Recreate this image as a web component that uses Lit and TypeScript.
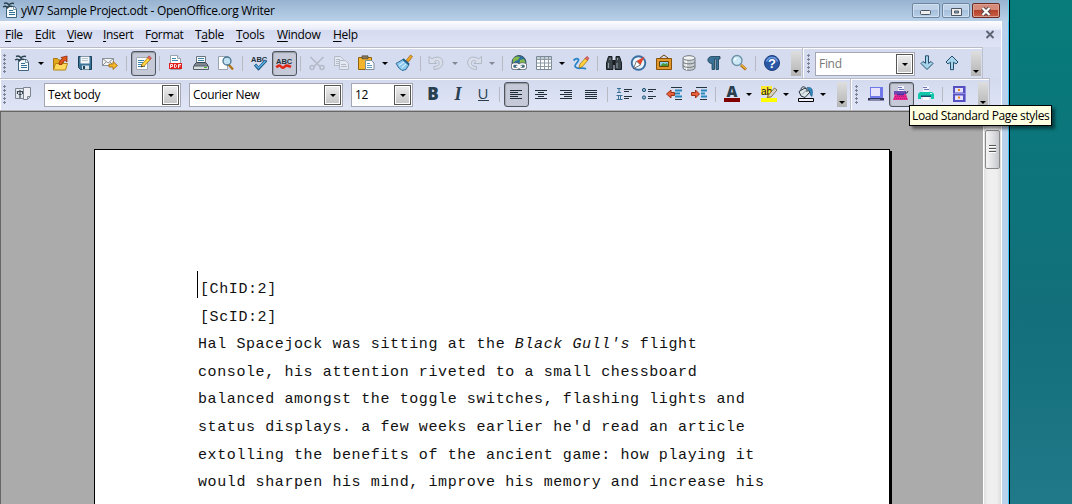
import { LitElement, html, css, svg } from "lit";
import { customElement } from "lit/decorators.js";
import { classMap } from "lit/directives/class-map.js";

const sheet = svg`<path d="M3.500 4.500h8l2 2.500v8.500h-10z" fill="#f6fafc" stroke="#3f667f"/><path d="M10.500 5v2.500h3" fill="none" stroke="#7696aa"/><path d="M6 8.500h4M6 10.500h6M6 12.500h6" stroke="#2f7195"/><path d="M1 1.500c2-1 4 0 5 1.500c1-1.500 3-2 5-1.500M0 5c2-1.200 3.500-.8 4.500.8C5.500 4.500 7 4 9 4.500" fill="none" stroke="#2b424f" stroke-width="1.400"/>`;
const sheetLines = svg`<path d="M1.500 2.500h11v12h-11z" fill="#fdfeff" stroke="#a0adb8"/><path d="M3 5.500h6M3 7.500h5M3 9.500h4M3 11.500h7" stroke="#3a86ae"/>`;

const icons: Record<string, unknown> = {
  doc: sheet,
  open: svg`<path d="M1.500 3.500h4l1 1.500h5v9h-10z" fill="#e6a81c" stroke="#a87810"/><path d="M3.500 8.500h12l-2 6.500H1.500z" fill="#ffd95c" stroke="#b58412"/><path d="M7 9.500c0-3 1.500-4.500 3.500-5.500L9 2.500l6-1.500v6l-1.800-1.500C11 6.500 10 7.500 10 9.500z" fill="#e2551d" stroke="#8f2c08" stroke-width=".8"/>`,
  save: svg`<path d="M1.500 1.500h13v13h-11l-2-2z" fill="#3a7396" stroke="#1c3f58"/><path d="M3.500 1.500h9v7h-9z" fill="#f2f6f8"/><path d="M5 3.500h6M5 5.500h6" stroke="#b8c6d0"/><path d="M5 10.500h7v4H5z" fill="#d8e4ec"/><path d="M6 11h2v3H6z" fill="#1c3f58"/>`,
  mail: svg`<path d="M.5 3.500h11v7H.5z" fill="#f5f5f5" stroke="#8b929a"/><path d="M.5 3.500L6 8l5.500-4.500M.5 10.500L4 7M11.500 10.500L8 7" fill="none" stroke="#8b929a"/><path d="M7 9h4V6.500l4.500 4L11 14.500V12H7z" fill="#f3b62c" stroke="#a06a08" stroke-width=".8"/>`,
  edit: svg`${sheetLines}<path d="M7 9l6.500-7 2.300 2-6.500 7L6 12z" fill="#ffd23e" stroke="#9a6b10" stroke-width=".7"/><path d="M12.500 2.500L14 .8l2.500 2.200-1.500 1.600z" fill="#e86a6a" stroke="#9c2c2c" stroke-width=".5"/><path d="M5.800 12.200l.8-2 1.500 1.300z" fill="#333"/>`,
  pdf: svg`<path d="M2.500.5h7l3 3v11h-10z" fill="#fff" stroke="#98a4ae"/><path d="M9.500.5v3h3" fill="#dfe6ea" stroke="#98a4ae"/><path d="M4 3.500h4M4 5.500h6" stroke="#3a86ae"/><path d="M1 8h13v6H1z" fill="#e01f1f"/><path d="M2.500 13V9.500h2v2H3M6.500 9.500v3h1l1-1v-1l-1-1zM10.500 13V9.500H13M10.500 11h2" fill="none" stroke="#fff" stroke-width=".9"/>`,
  print: svg`<path d="M3.500 1.500h9v6h-9z" fill="#f7f9fa" stroke="#68747e"/><path d="M5 3.500h6M5 5.500h6" stroke="#3a86ae"/><path d="M1.500 9.500l2-2h9l2 2v2h-13z" fill="#7c878f" stroke="#3b464e"/><path d="M.5 11h15v3.500H.5z" fill="#d8dddf" stroke="#525d65"/><path d="M11 12.500h3" stroke="#49b02c"/>`,
  preview: svg`<path d="M.5 1.500h9v13h-9z" fill="#fff" stroke="#98a4ae"/><path d="M10.500 9.500l4.500 5" stroke="#b0751a" stroke-width="2.400"/><circle cx="9" cy="6" r="4" fill="#c2e1f2" stroke="#4a7690" stroke-width="1.300"/>`,
  spell: svg`<text x="0" y="6.500" class="abc">ABC</text><path d="M4 9.500l3.500 4L15 5.500" fill="none" stroke="#1d567f" stroke-width="3"/><path d="M4.500 10l3 3L14.500 6" fill="none" stroke="#57b0e4" stroke-width="1.500"/>`,
  auto: svg`<text x="0" y="8.500" class="abc">ABC</text><path d="M.5 12.500c1-1.500 3-3 4.500-1s2.500 1.500 4-.2 3.500-.5 6 .7" fill="none" stroke="#e12718" stroke-width="2.600"/>`,
  cut: svg`<path d="M1.500 2l10 10M14.500 2l-10 10" stroke="#b4bac6" stroke-width="1.600"/><circle cx="3" cy="12.500" r="2" fill="none" stroke="#b4bac6" stroke-width="1.500"/><circle cx="13" cy="12.500" r="2" fill="none" stroke="#b4bac6" stroke-width="1.500"/>`,
  copy: svg`<path d="M.5 1.500h6l3 3v6h-9z" fill="#e3e7f2" stroke="#b4bac6"/><path d="M2 4.500h4M2 6.500h3M2 8.500h3" stroke="#b4bac6"/><path d="M5.500 5.500h6l3 3v6h-9z" fill="#e3e7f2" stroke="#b4bac6"/><path d="M7 9.500h5M7 11.500h6" stroke="#b4bac6"/>`,
  paste: svg`<path d="M-.5 2.500h13v12h-13z" fill="#f2b42a" stroke="#8f6410"/><path d="M3 .8h6v3H3z" fill="#8a7a5c" stroke="#40382a" stroke-width=".6"/><path d="M6.500 5.500h6l2.500 2.500v6.500H6.500z" fill="#fff" stroke="#7d8d9a"/><path d="M8 8.500h3M8 10.500h5M8 12.500h5" stroke="#3a86ae" stroke-width=".8"/>`,
  brush: svg`<path d="M10 5.500l4.500-5.500 2 1.500-4 5.500z" fill="#f2a72a" stroke="#8f5e10" stroke-width=".7"/><path d="M0 8.500l7-4 6 5-3 5-4 1c-1-2-3-1-3-3-1.500 0-1-2-3-4z" fill="#8ecbf0" stroke="#2a6a96"/><path d="M7 4l6 5.500" stroke="#1f5f8a" stroke-width="1.800"/><path d="M3 10.500l5-3.500M5.500 13l4.500-4" stroke="#e5f5fd"/>`,
  undo: svg`<path d="M0 1.500l2 1.500 1 1C6 1.500 12 1 13.500 5.500S11 14.500 5 14.500v-3c4 0 5.500-1.500 5-4S7 5 5.500 6.500L7.500 8.500H0z" fill="#d9deea" stroke="#b0b7c5"/>`,
  redo: svg`<path d="M15.500 1.500l-2 1.500-1 1C9.500 1.500 3.500 1 2 5.500S4.500 14.500 10.500 14.500v-3c-4 0-5.500-1.500-5-4S8.500 5 10 6.500L8 8.500h7.500z" fill="#d9deea" stroke="#b0b7c5"/>`,
  globe: svg`<circle cx="8" cy="7.500" r="7" fill="#2d6f9c" stroke="#3c5561"/><path d="M2 4c2-3 5-3 7-2l-2 3-3 1-2 3zM9 5l4-1 1.500 4-3 3-3-2z" fill="#86b94a"/><rect x="1.500" y="9" width="6" height="4.500" rx="2" fill="none" stroke="#55626a" stroke-width="3"/><rect x="8.500" y="9" width="6" height="4.500" rx="2" fill="none" stroke="#55626a" stroke-width="3"/><rect x="1.500" y="9" width="6" height="4.500" rx="2" fill="none" stroke="#fff" stroke-width="1.500"/><rect x="8.500" y="9" width="6" height="4.500" rx="2" fill="none" stroke="#fff" stroke-width="1.500"/><path d="M5 11.300h6" stroke="#fff" stroke-width="1.300"/>`,
  table: svg`<path d="M.5 1.500h15v13H.5z" fill="#fff" stroke="#7b8a96"/><path d="M1 2h14v2H1z" fill="#c3ced6"/><path d="M1 4.500h15M1 8h15M1 11.500h15M4.500 2v12M8.500 2v12M12.500 2v12" stroke="#8b9aa5"/>`,
  draw: svg`<path d="M.5 5.500c3-3 7-2 4 1.500S1 12 4 13s6-1 9 1" fill="none" stroke="#2784c6" stroke-width="1.800"/><path d="M7 9l5.500-6L15 5l-5.500 6.500L6 13z" fill="#ffd23e" stroke="#9a6b10" stroke-width=".7"/><path d="M12 3.500L14 1.300 16 3.200l-1.500 2z" fill="#e86a6a" stroke="#9c2c2c" stroke-width=".5"/>`,
  find: svg`<path d="M2.500 1.500h3.500v3L7 6v8.500H.5V8zM13.500 1.500H10v3L9 6v8.500h6.500V8z" fill="#3c464c" stroke="#171d21"/><path d="M7 5h2v5H7z" fill="#171d21"/><path d="M2.500 8v5M11 8v5M4 3v2M11.500 3v2" stroke="#93a2ab"/>`,
  nav: svg`<circle cx="7.500" cy="8" r="6.800" fill="#e9f4fb" stroke="#3b6fa3" stroke-width="1.900"/><path d="M13.500 1.500L9.500 10 5.500 6z" fill="#e4452a"/><path d="M2.500 13.500L5.500 6l4 4z" fill="#fff" stroke="#444" stroke-width=".7"/>`,
  gallery: svg`<path d="M8 0L4 3M8 0l4 3" stroke="#6b4208"/><path d="M.5 3.500h15v11H.5z" fill="#e09a2c" stroke="#8a530b"/><path d="M3.500 6.500h9v5h-9z" fill="#8cd0f0" stroke="#6b4208"/><path d="M4 11l3-3 2 1 2-1 1.500 3z" fill="#4d9a35"/>`,
  db: svg`<path d="M2 3.500v9.500c0 3 12 3 12 0V3.500z" fill="#c8cdd0" stroke="#71797e"/><path d="M4 5v9M5.500 5v10" stroke="#fff"/><ellipse cx="8" cy="3" rx="6" ry="2.300" fill="#f3f5f5" stroke="#71797e"/><path d="M2 7c1 2.500 11 2.500 12 0M2 10.500c1 2.500 11 2.500 12 0" fill="none" stroke="#71797e"/>`,
  pilcrow: svg`<path d="M14 1.500H6C.5 1.500.5 8.500 6 8.500V14.500h2.500V4H10v10.500h2.500V4H14z" fill="#3b7396" stroke="#183c54" stroke-width=".8"/>`,
  zoom: svg`<path d="M10 10l5 4.500" stroke="#a86b12" stroke-width="3"/><path d="M10.500 10l4.500 4" stroke="#f0b53a" stroke-width="1.300"/><circle cx="6" cy="5.500" r="5" fill="#cde8f6" stroke="#6d92a8" stroke-width="1.400"/><path d="M3.500 5.500c0-1.500 1-2 2-2.300" fill="none" stroke="#fff" stroke-width="1.300"/>`,
  help: svg`<circle cx="8" cy="8" r="7.500" fill="#2a57a5" stroke="#1d3f7e"/><path d="M2.500 6.500C4 1 12 1 13.500 6.500" fill="none" stroke="#6e9be0" stroke-width="1.500"/><text x="8" y="12.800" class="q">?</text>`,
  styles: svg`<path d="M.5 2.500h9v10h-9z" fill="#e4e7ee" stroke="#7b8691"/><path d="M8.500 1.500h7v9l-3 3H8.500z" fill="#eef0f5" stroke="#7b8691"/><path d="M15 10.500h-2.500V13" fill="none" stroke="#7b8691"/><path d="M2.500 8V5.500h5V8M5 4v8M3.500 8.500h3" stroke="#3c4752" stroke-width="1.200" fill="none"/>`,
  bold: svg`<text x="8" y="14" class="fmt b">B</text>`,
  italic: svg`<text x="8" y="14" class="fmt i">I</text>`,
  under: svg`<text x="8" y="12.500" class="fmt u">U</text><path d="M3 14.500h11" stroke="#28404f"/>`,
  left: svg`<path d="M2 4.500h12M2 6.500h8M2 8.500h12M2 10.500h8M2 12.500h12" stroke="#1f2d36"/>`,
  center: svg`<path d="M2 4.500h12M5 6.500h6M2 8.500h12M5 10.500h6M2 12.500h12" stroke="#1f2d36"/>`,
  right: svg`<path d="M2 4.500h12M6 6.500h8M2 8.500h12M6 10.500h8M2 12.500h12" stroke="#1f2d36"/>`,
  justify: svg`<path d="M2 4.500h12M2 6.500h12M2 8.500h12M2 10.500h12M2 12.500h12" stroke="#1f2d36"/>`,
  numbers: svg`<path d="M1 2.500h4M3 2v4M1 6.500h4M.5 9.500h6M2.500 9v4M4.500 9v4M.5 13.500h6" stroke="#3a7196"/><path d="M8 3.500h8M8 5.500h5M8 10.500h8M8 12.500h5" stroke="#26343d"/>`,
  bullets: svg`<circle cx="3" cy="4" r="1.600" fill="#8fc0de" stroke="#1f4d6b"/><circle cx="3" cy="11.500" r="1.600" fill="#8fc0de" stroke="#1f4d6b"/><path d="M7 3.500h8M7 5.500h5M7 10.500h8M7 12.500h5" stroke="#26343d"/>`,
  outdent: svg`<path d="M5 1.500h11M9 13.500h7" stroke="#26343d"/><path d="M9 4.500h7M9 7.500h5M9 10.500h7" stroke="#2b86bd" stroke-width="1.800"/><path d="M.5 8L5 4v2.500h3.500v3H5V12z" fill="#e8603a" stroke="#94250c" stroke-width=".9"/>`,
  indent: svg`<path d="M5 1.500h11M9 13.500h7" stroke="#26343d"/><path d="M10 4.500h6M10 7.500h4M10 10.500h6" stroke="#2b86bd" stroke-width="1.800"/><path d="M8.500 8L4.500 4v2.500H.5v3h4V12z" fill="#e8603a" stroke="#94250c" stroke-width=".9"/>`,
  color: svg`<text x="8" y="10.500" class="fmt a">A</text><path d="M0 12h16v4H0z" fill="#800000"/>`,
  mark: svg`<path d="M0 0h11v9H0z" fill="#ffe92e"/><text x="0" y="8.500" class="ab">ab</text><path d="M7 9.500L13.500 2l2.500 2-6 7-4 .5z" fill="#d9d4c5" stroke="#6e5b29" stroke-width=".8"/><path d="M6 11l1-2 2 1.500z" fill="#c98c1a"/><path d="M0 12h16v4H0z" fill="#ff0"/>`,
  bucket: svg`<path d="M9 1.500c7-1 5.500 5 5 9-2.500-1-1.500-4-3-5.500z" fill="#2e86bd" stroke="#1d567f" stroke-width=".6"/><path d="M1 5.500l6-3.500 5 4-5 5.500-4-1.500z" fill="#dfe6ea" stroke="#27343d"/><path d="M3 4c0-5 6-4 6 2" fill="none" stroke="#27343d"/><path d="M4 8.500l5-5" stroke="#8a979f"/><path d="M.5 12.500h15v3H.5z" fill="#eef1fb" stroke="#000"/>`,
  monitor: svg`<path d="M2 1h13v11H2z" fill="#6f78ea"/><path d="M3 2h9v8H3z" fill="#e6e3fb"/><path d="M0 12h16v2.500H0z" fill="#34365e"/><path d="M2 13.500h10" stroke="#8188b0"/>`,
  printPink: svg`<path d="M5 0h6v5H5z" fill="#f4f4ff"/><path d="M5 1.500h4M6 3.500h5" stroke="#7076b5"/><path d="M1 5h12v4H1z" fill="#6a4bb4"/><path d="M12 7h2l1-2" fill="none" stroke="#2d2a58"/><path d="M2 8h11l2 6H0z" fill="#e82a90"/><path d="M4 8.500h7" stroke="#4b2f9e" stroke-width="1.500"/><path d="M2 10.500h12M1 12.500h13" stroke="#b3187a" stroke-dasharray="1 1"/>`,
  printGreen: svg`<path d="M5 0h6v6H5z" fill="#f4f4ff"/><path d="M5 1.500h4M6 3.500h5" stroke="#7076b5"/><path d="M2 6h12l2 2v5h-3v-2H3v2H0V8z" fill="#13c7ab"/><path d="M3 9.500h10v1.500H3z" fill="#1d4f75"/><path d="M5 11h6v3H5z" fill="#fff"/><path d="M12 7.500h2" stroke="#d7fff6"/>`,
  cabinet: svg`<path d="M2 0h13v16H2z" fill="#5450c0"/><path d="M4 2h8v4.500H4zM4 9.500h8v4.500H4z" fill="#e5e0fb"/><path d="M7 4h2M7 11.500h2" stroke="#f08a1a" stroke-width="1.800"/><path d="M14.500 0v16M2 7.500h13" stroke="#8f8ce6"/>`,
  down: svg`<path d="M6.500.8h3v7.500l2.500-1.800 2 2L8 14.500 2 8.500l2-2 2.500 1.800z" fill="#a5d3ea" stroke="#244e6c"/>`,
  up: svg`<path d="M6.500 14.700h3V7.200L12 9l2-2-6-6-6 6 2 2 2.500-1.800z" fill="#a5d3ea" stroke="#244e6c"/>`,
};

type Item = string;

// "|" separator, "v" drop-down arrow, "x" disabled arrow, "*name" pressed button
const standard: Item[] = [
  "doc", "v", "open", "save", "mail", "|", "*edit", "|", "pdf", "print", "preview", "|",
  "spell", "*auto", "|", "cut", "copy", "paste", "v", "brush", "|", "undo", "x", "redo", "x", "|",
  "globe", "table", "v", "draw", "|", "find", "nav", "gallery", "db", "pilcrow", "zoom", "|", "help",
];
const formatting: Item[] = [
  "bold", "italic", "under", "|", "*left", "center", "right", "justify", "|",
  "numbers", "bullets", "outdent", "indent", "|", "color", "v", "mark", "v", "bucket", "v",
];
const pageTools: Item[] = ["monitor", "*printPink", "printGreen", "|", "cabinet"];

const menus: [string, string, string, number][] = [
  ["", "F", "ile", 30], ["", "E", "dit", 32], ["", "V", "iew", 36], ["", "I", "nsert", 42],
  ["F", "o", "rmat", 50], ["T", "a", "ble", 41], ["", "T", "ools", 41], ["", "W", "indow", 56], ["", "H", "elp", 40],
];

@customElement("app-root")
export class AppRoot extends LitElement {
  static styles = css`
    :host { display: block; width: 1072px; height: 504px; overflow: hidden; position: relative;
      font: 12px "Open Sans", "Noto Sans", sans-serif; color: #000; }
    * { box-sizing: border-box; }
    .desktop { display: flex; height: 504px;
      background: linear-gradient(to bottom, #077c7a 0, #0a777b 110px, #136f7b 320px, #207988 504px); }
    .window { width: 1010px; height: 504px; display: flex; flex-direction: column; border-right: 1px solid #000;
      background: #b9d1ea; }
    .title { height: 21px; flex: none; display: flex; align-items: center; padding: 0 8px 0 3px;
      background: linear-gradient(#98b3d0, #b9d0e9); border-right: 1px solid #5bd8f5; }
    .title svg { margin-top: -1px; }
    .caption { margin-left: 2px; flex: 1; line-height: 20px; letter-spacing: -0.28px; white-space: nowrap; }
    .wbtn { width: 28px; height: 15px; margin-left: 2px; border: 1px solid #6d87a3; border-radius: 2px;
      background: linear-gradient(#bfd2e7 45%, #a6c0dc 50%, #b8cfe6); box-shadow: inset 0 0 0 1px #d0e0f0; display: flex; }
    .wbtn svg { margin: auto; }
    .wbtn.close { background: linear-gradient(#d58a7a 45%, #b4432c 50%, #c95f47); border-color: #6d2a20; box-shadow: inset 0 0 0 1px #dba294; }
    .body { flex: 1; min-height: 0; display: flex; border-right: 1px solid #3cc8f4; }
    .client { width: 1002px; display: flex; flex-direction: column; background: #dfe4f5; border-right: 1px solid #fff; }
    .menubar { height: 26px; flex: none; display: flex; align-items: center; padding: 1px 5px 0;
      background: linear-gradient(#fdfdff 0, #e7eaf8 9px, #d4daef 9px, #e0e4f6 26px); }
    .menu { line-height: 24px; letter-spacing: -0.3px; white-space: nowrap; flex: none; }
    .menu u { text-underline-offset: 2px; }
    .menubar .x { margin-left: auto; margin-right: 1px; }
    .bars { display: flex; flex: none; }
    .bars.one { height: 31px; background: #d6dcf0; }
    .bars.two { height: 33px; background: linear-gradient(#d3daee, #e0e5f6); border-bottom: 1px solid #b4b4b8; }
    .bar { display: flex; border-top: 1px solid #b9bbc6; box-shadow: inset 1px 1px #fff; border-right: 1px solid #bfc1ca;
      align-items: flex-start; padding-top: 3px; }
    .bar.std { width: 803px; } .bar.search { width: 180px; } .bar.fmtbar { width: 851px; } .bar.page { width: 139px; }
    .grip { width: 4px; height: 20px; margin: 3px 4px 0 3px; flex: none;
      background: radial-gradient(circle at 1.500px 1.500px, #7c8296 0 1px, transparent 1.200px) 0 0 / 4px 4px; }
    .search .grip { margin-left: 4px; }
    .page .grip { margin-left: 4px; margin-right: 5px; }
    .cell { width: 25px; height: 25px; padding: 4px 0 0 4px; flex: none; }
    .cell.on { border: 1px solid #51555f; border-radius: 3px; padding: 3px 0 0 3px; background: #c6cad8;
      box-shadow: inset 0 1px 1px #92969f, inset 1px 0 1px #a6aab5; }
    .arrow { width: 12px; height: 25px; padding: 11px 0 0 2px; flex: none; }
    .off { opacity: .38; }
    .sep { width: 8px; height: 25px; flex: none; padding: 5px 0 0 3px; }
    .sep::before { content: ""; display: block; width: 1px; height: 15px; background: #b8bac2; }
    .fmtbar .arrow { padding-left: 1px; }
    svg { display: block; overflow: visible; }
    .more { width: 10px; height: 25px; flex: none; margin-left: auto; padding: 19px 0 0 2px;
      background: linear-gradient(#dedede, #b4b4b4); }
    .std .more, .search .more { margin-right: 1px; }
    .fmtbar .more { margin-right: 3px; } .page .more { margin-right: 1px; }
    .combo { height: 24px; margin-top: 1px; border: 1px solid #a4a7b2; background: #fff; flex: none; display: flex; padding: 1px 1px 1px 3px; }
    .combo span { flex: 1; line-height: 20px; letter-spacing: -0.3px; white-space: nowrap; }
    .combo .drop { width: 17px; height: 20px; border: 1px solid #555; box-shadow: inset 0 0 0 1px #fff;
      background: linear-gradient(#eee, #c4c4c4); padding: 8px 0 0 5px; }
    .styles { width: 33px; display: flex; flex: none; }
    .search .combo { color: #777; }
    .main { flex: 1; min-height: 0; display: flex; border-top: 1px solid #666; }
    .canvas { width: 983px; background: #ababab; border-left: 1px solid #666; padding: 37px 0 0 93px; }
    .paper { width: 796px; height: 500px; background: #fff; border: 1px solid #000; box-shadow: 2px 2px #000;
      padding: 121px 0 0 103px; font: 15px/37px "Liberation Mono", monospace; letter-spacing: .6px; white-space: pre; color: #111; }
    .line { height: 27.600px; }
    .line.caret { box-shadow: -1px 0 #000; height: 27px; margin-bottom: .6px; }
    .tag { padding-left: 2px; }
    .scroll { width: 18px; border-left: 1px solid #fff; padding: 18px 1px 0; background: linear-gradient(90deg, #e0e0e0, #f0f0f0 4px, #eee 13px, #dcdcdc); }
    .thumb { height: 39px; width: 15px; border: 1px solid #888; border-radius: 2px; background: linear-gradient(90deg, #f5f5f5, #e0e0e4 50%, #c5c6cc);
      padding: 14px 0 0 3px; }
    .tip { position: absolute; left: 909px; top: 105px; width: 143px; height: 21px; border: 1px solid #000; background: #ffffe1;
      line-height: 20px; padding-left: 2px; letter-spacing: -0.37px; white-space: nowrap; box-shadow: 3px 3px 3px #0007; }
    .abc { font: bold 7.500px "Liberation Sans"; fill: #22303a; }
    .q { font: bold 13px "Liberation Sans"; fill: #fff; text-anchor: middle; }
    .fmt { fill: #28404f; text-anchor: middle; }
    .b { font: 800 17px "Open Sans"; } .i { font: italic bold 18px "Liberation Serif"; }
    .u { font: 15px "Open Sans"; } .a { font: 800 15px "Open Sans"; }
    .ab { font: 10px "Liberation Sans"; fill: #111; }
  `;

  private icon(name: string) {
    return html`<svg width="16" height="16" viewBox="0 0 16 16">${icons[name]}</svg>`;
  }

  private tri() {
    return html`<svg width="6" height="3" viewBox="0 0 6 3"><path d="M0 0h6L3 3z" fill="#000"/></svg>`;
  }

  private item(it: Item) {
    if (it === "|") return html`<i class="sep"></i>`;
    if (it === "v" || it === "x") return html`<span class=${classMap({ arrow: true, off: it === "x" })}>${this.tri()}</span>`;
    const on = it[0] === "*";
    return html`<span class=${classMap({ cell: true, on })}>${this.icon(on ? it.slice(1) : it)}</span>`;
  }

  private combo(text: string, width: number, gap: number) {
    return html`<div class="combo" style="width:${width}px;margin-right:${gap}px"><span>${text}</span><div class="drop">${this.tri()}</div></div>`;
  }

  private more() {
    return html`<div class="more">${this.tri()}</div>`;
  }

  render() {
    const lines = [
      html`Hal Spacejock was sitting at the <em>Black Gull's</em> flight`,
      "console, his attention riveted to a small chessboard",
      "balanced amongst the toggle switches, flashing lights and",
      "status displays. a few weeks earlier he'd read an article",
      "extolling the benefits of the ancient game: how playing it",
      "would sharpen his mind, improve his memory and increase his",
    ];
    return html`
      <div class="desktop">
        <div class="window">
          <div class="title">
            ${this.icon("doc")}
            <div class="caption">yW7 Sample Project.odt - OpenOffice.org Writer</div>
            <div class="wbtn"><svg width="12" height="5"><rect x=".5" y="2.500" width="10" height="4" rx="1" fill="#eee" stroke="#4c5560"/></svg></div>
            <div class="wbtn"><svg width="11" height="8"><path d="M.5 1.500h10v7H.5z" fill="#eee" stroke="#4c5560"/><path d="M3.500 4h4v2h-4z" fill="#8fb0cc" stroke="#4c5560"/></svg></div>
            <div class="wbtn close"><svg width="12" height="9"><path d="M2.500 2l7 7M9.500 2l-7 7" stroke="#53454a" stroke-width="4"/><path d="M2.500 2l7 7M9.500 2l-7 7" stroke="#fff" stroke-width="2.200"/></svg></div>
          </div>
          <div class="body">
            <div class="client">
              <div class="menubar">
                ${menus.map(([a, k, b, w]) => html`<span class="menu" style="width:${w}px">${a}<u>${k}</u>${b}</span>`)}
                <svg class="x" width="10" height="9"><path d="M1.500 1l7 7M8.500 1l-7 7" stroke="#5b6370" stroke-width="1.800"/></svg>
              </div>
              <div class="bars one">
                <div class="bar std"><i class="grip"></i>${standard.map((i) => this.item(i))}${this.more()}</div>
                <div class="bar search"><i class="grip"></i>${this.combo("Find", 100, 0)}${this.item("down")}${this.item("up")}${this.more()}</div>
              </div>
              <div class="bars two">
                <div class="bar fmtbar"><i class="grip"></i><div class="styles">${this.item("styles")}</div>
                  ${this.combo("Text body", 137, 8)}${this.combo("Courier New", 154, 8)}${this.combo("12", 62, 8)}
                  ${formatting.map((i) => this.item(i))}${this.more()}</div>
                <div class="bar page"><i class="grip"></i>${pageTools.map((i) => this.item(i))}${this.more()}</div>
              </div>
              <div class="main">
                <div class="canvas">
                  <div class="paper"><div class="line caret tag">[ChID:2]</div><div class="line tag">[ScID:2]</div>${lines.map((l) => html`<div class="line">${l}</div>`)}</div>
                </div>
                <div class="scroll"><div class="thumb"><svg width="7" height="10"><path d="M0 .5h7M0 3.500h7M0 6.500h7" stroke="#555"/><path d="M0 1.500h7M0 4.500h7M0 7.500h7" stroke="#fff"/></svg></div></div>
              </div>
            </div>
          </div>
        </div>
      </div>
      <div class="tip">Load Standard Page styles</div>
    `;
  }
}
